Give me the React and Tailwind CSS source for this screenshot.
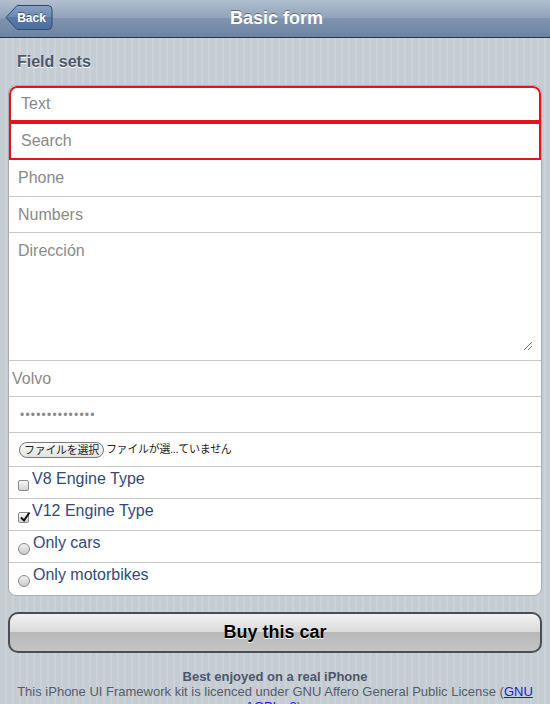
import React from 'react';

const font = { fontFamily: '"Liberation Sans", "Noto Sans CJK JP", Arial, sans-serif' };

function BackButton() {
  return (
    <div className="relative w-[48px] h-[27px]">
      <svg width="48" height="27" viewBox="0 0 48 27" className="block">
        <defs>
          <linearGradient id="bk" x1="0" y1="0" x2="0" y2="1">
            <stop offset="0" stopColor="#8aa1c1" />
            <stop offset="0.5" stopColor="#6b88b0" />
            <stop offset="0.5" stopColor="#5a79a5" />
            <stop offset="1" stopColor="#4d6f9e" />
          </linearGradient>
        </defs>
        <path
          d="M1 13.5 L12 1.5 H43 Q47 1.5 47 5.5 V21.5 Q47 25.5 43 25.5 H12 Z"
          fill="url(#bk)"
          stroke="#2f4a70"
          strokeWidth="1"
          strokeLinejoin="round"
        />
      </svg>
      <span className="absolute inset-0 flex items-center justify-center pl-[5px] text-[12px] font-bold text-white [text-shadow:0_-1px_0_rgba(0,0,0,0.45)]">
        Back
      </span>
    </div>
  );
}

function Row({ h, children, className = '' }) {
  return (
    <div className={`flex items-center border-b border-[#c8c8c8] ${h} ${className}`}>{children}</div>
  );
}

function CheckRow({ label, checked, radio, last }) {
  return (
    <div className={`flex items-start h-[32px] pl-[9px] pt-[2px] ${last ? '' : 'border-b border-[#c8c8c8]'}`}>
      {radio ? (
        <span className="mt-[10px] w-[12px] h-[12px] rounded-full border border-[#8a8a8a] bg-[linear-gradient(#f4f4f4,#c9c9c9)]" />
      ) : (
        <span className="relative mt-[11px] w-[11px] h-[11px] rounded-[2px] border border-[#8a8a8a] bg-[linear-gradient(#f7f7f7,#d2d2d2)]">
          {checked && (
            <svg width="12" height="12" viewBox="0 0 12 12" className="absolute left-[0px] top-[-2px]">
              <path d="M2 6.5 L5 9.5 L10.5 1.5" fill="none" stroke="#111" strokeWidth="2" />
            </svg>
          )}
        </span>
      )}
      <span className="ml-[3px] text-[16px] leading-[20px] text-[#34497a]">{label}</span>
    </div>
  );
}

export default function App() {
  return (
    <div
      style={font}
      className="w-[550px] h-[704px] overflow-hidden bg-[repeating-linear-gradient(90deg,#c5ccd3_0px,#c5ccd3_5px,#cbd2d8_5px,#cbd2d8_7px)]"
    >
      {/* Toolbar */}
      <div className="relative h-[38px] flex items-center justify-center border-b border-[#2d3642] bg-[linear-gradient(#b2bfcf,#8fa2b9_50%,#7f94ae_50%,#6d84a2)]">
        <div className="absolute left-[5px] top-[4px]">
          <BackButton />
        </div>
        <h1 className="pl-[3px] text-[18px] font-bold text-white [text-shadow:0_-1px_0_rgba(0,0,0,0.4)]">Basic form</h1>
      </div>

      {/* Field sets */}
      <h2 className="pl-[17px] pt-[15px] h-[47px] text-[16px] leading-[18px] font-bold text-[#4c566c] [text-shadow:0_1px_0_#fff]">
        Field sets
      </h2>

      <div className="mx-2 bg-white rounded-[8px] border border-[#a8adb3] overflow-hidden">
        <div className="flex items-center h-[36px] pl-[10px] border-2 border-[#e3141b] rounded-t-[8px] text-[16px] text-[#8a8a8a]">
          Text
        </div>
        <div className="flex items-center h-[38px] pl-[10px] border-2 border-[#e3141b] text-[16px] text-[#8a8a8a]">
          Search
        </div>
        <Row h="h-[37px] pl-[9px] text-[16px] text-[#8a8a8a]">Phone</Row>
        <Row h="h-[36px] pl-[9px] text-[16px] text-[#8a8a8a]">Numbers</Row>
        <div className="relative h-[128px] border-b border-[#c8c8c8] pl-[9px] pt-[6px] text-[16px] text-[#8a8a8a]">
          Dirección
          <svg width="10" height="10" viewBox="0 0 10 10" className="absolute right-[8px] bottom-[9px]">
            <path d="M1 9 L9 1 M5 9 L9 5" stroke="#777" strokeWidth="1" />
          </svg>
        </div>
        <Row h="h-[36px] pl-[3px] text-[16px] text-[#8a8a8a]">Volvo</Row>
        <Row h="h-[36px] pl-[11px] text-[12px] tracking-[1.2px] text-[#8a8a8a]">••••••••••••••</Row>
        <Row h="h-[34px] pl-[10px] text-[11px] text-[#222]">
          <span className="px-[4px] h-[16px] leading-[14px] rounded-full border border-[#777] bg-[linear-gradient(#fafafa,#e2e2e2)] tracking-[-0.3px]">
            ファイルを選択
          </span>
          <span className="ml-[2px] tracking-[-0.3px]">ファイルが選...ていません</span>
        </Row>
        <CheckRow label="V8 Engine Type" />
        <CheckRow label="V12 Engine Type" checked />
        <CheckRow label="Only cars" radio />
        <CheckRow label="Only motorbikes" radio last />
      </div>

      {/* Button */}
      <div className="px-2 pt-[16px]">
        <button className="w-full h-[41px] rounded-[10px] border-2 border-[#4a4d52] bg-[linear-gradient(#f2f2f2,#d9d9d9_50%,#b8b8b8_50%,#c4c4c4)] text-[18px] font-bold text-black [text-shadow:0_1px_0_#fff]">
          Buy this car
        </button>
      </div>

      {/* Footer */}
      <div className="pt-[16px] px-[12px] text-center text-[#555c6a]">
        <p className="text-[13px] font-bold leading-[15px] text-[#4c566c]">Best enjoyed on a real iPhone</p>
        <p className="text-[13px] leading-[15px]">
          This iPhone UI Framework kit is licenced under GNU Affero General Public License (
          <a className="text-[#1a1adf] underline">GNU AGPL v3</a>).
        </p>
      </div>
    </div>
  );
}
